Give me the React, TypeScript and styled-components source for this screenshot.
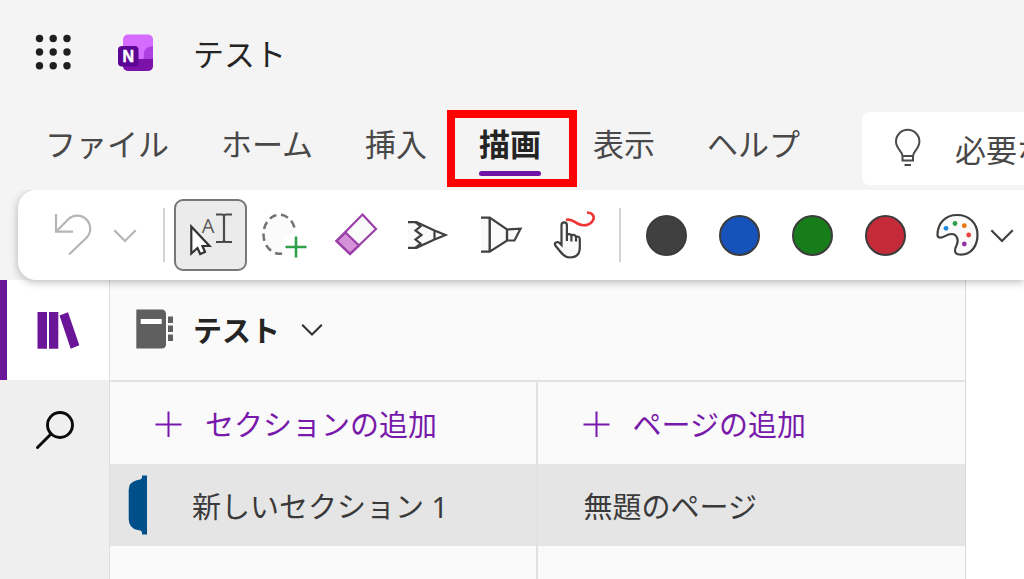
import React from "react";
import styled, { createGlobalStyle } from "styled-components";

const GlobalStyle = createGlobalStyle`
  *, *::before, *::after { box-sizing: border-box; }
  body {
    margin: 0;
    overflow: hidden;
    background: #f4f4f4;
    color: #242424;
    font-family: "Noto Sans", "Noto Sans CJK JP", sans-serif;
  }
  button, input {
    margin: 0;
    padding: 0;
    border: 0;
    background: none;
    color: inherit;
    font: inherit;
  }
  button { cursor: pointer; }
  svg { display: block; flex: none; }
`;

const Page = styled.div`
  display: flex;
  flex-direction: column;
  min-height: 100vh;
`;

const Header = styled.header`
  display: flex;
  align-items: center;
  height: 108px;
  padding: 0 32px 4px;
`;

const LauncherButton = styled.button`
  margin-right: 42px;
`;

const DocumentTitle = styled.h1`
  margin: 0 0 0 35px;
  padding-top: 4px;
  font-size: 31px;
  line-height: 44px;
  font-weight: 400;
`;

const TabRow = styled.div`
  display: flex;
  height: 82px;
  padding-left: 45px;
`;

const Tabs = styled.nav`
  display: flex;
  flex: none;
  gap: 52px;
`;

const Tab = styled.button<{ $active?: boolean }>`
  position: relative;
  height: 74px;
  padding-bottom: 2px;
  font-size: 31px;
  line-height: 44px;
  white-space: nowrap;
  font-weight: ${(p) => (p.$active ? 700 : 400)};
  color: ${(p) => (p.$active ? "#242424" : "#484848")};
`;

const TabUnderline = styled.span`
  position: absolute;
  left: 0;
  right: 0;
  bottom: 6px;
  height: 5px;
  border-radius: 3px;
  background: #7014a8;
`;

const HighlightFrame = styled.span`
  position: absolute;
  inset: 2px -36px -5px -32px;
  border: 8px solid #ff0000;
`;

const SearchBox = styled.label`
  display: flex;
  flex: 1;
  align-items: center;
  min-width: 0;
  height: 73px;
  margin: 4px 0 0 62px;
  padding-left: 30px;
  gap: 32px;
  border-radius: 8px 0 0 8px;
  background: #fff;
`;

const SearchInput = styled.input`
  flex: 1;
  min-width: 0;
  height: 46px;
  padding-top: 2px;
  outline: none;
  font-size: 31px;
  &::placeholder { color: #484848; opacity: 1; }
`;

const Toolbar = styled.div`
  position: relative;
  z-index: 1;
  display: flex;
  align-items: center;
  height: 90px;
  margin-left: 18px;
  padding-left: 16px;
  border-radius: 18px 0 0 18px;
  background: #fff;
  box-shadow: 0 2px 9px rgba(0, 0, 0, 0.28);
  clip-path: inset(0 0 -20px -20px);
`;

const ToolButton = styled.button<{ $selected?: boolean }>`
  display: flex;
  flex: none;
  align-items: center;
  justify-content: center;
  width: 73px;
  height: 72px;
  border: 2px solid ${(p) => (p.$selected ? "#777" : "transparent")};
  border-radius: 9px;
  background: ${(p) => (p.$selected ? "#ebebeb" : "none")};
`;

const PaletteButton = styled(ToolButton)`
  width: 71px;
`;

const ChevronButton = styled.button<{ $compact?: boolean }>`
  display: flex;
  flex: none;
  align-items: center;
  justify-content: center;
  width: ${(p) => (p.$compact ? "18px" : "36px")};
  height: 72px;
`;

const Divider = styled.span`
  flex: none;
  width: 2px;
  height: 54px;
  margin: 0 9px 0 7px;
  background: #d4d4d4;
`;

const WideDivider = styled(Divider)`
  margin-left: 20px;
`;

const Swatch = styled.span<{ $color: string }>`
  width: 41px;
  height: 41px;
  border: 2px solid #3c3c3c;
  border-radius: 50%;
  background: ${(p) => p.$color};
`;

const Workspace = styled.main`
  display: flex;
  flex: 1;
`;

const Rail = styled.nav`
  flex: none;
  width: 110px;
  border-right: 1px solid #dfdfdf;
  background: #efefef;
`;

const RailButton = styled.button<{ $active?: boolean }>`
  display: flex;
  align-items: center;
  justify-content: center;
  width: 100%;
  height: 100px;
  border-left: ${(p) => (p.$active ? "7px solid #6b1599" : "0")};
  background: ${(p) => (p.$active ? "#fff" : "transparent")};
`;

const Navigator = styled.section`
  display: flex;
  flex: 0 1 856px;
  flex-direction: column;
  min-width: 0;
  border-right: 1px solid #d9d9d9;
  background: #fafafa;
`;

const NotebookButton = styled.button`
  display: flex;
  align-items: center;
  height: 102px;
  padding: 0 0 2px 26px;
  border-bottom: 2px solid #e3e3e3;
  font-size: 29px;
  font-weight: 700;
  line-height: 42px;
`;

const Label = styled.span`
  padding-top: 3px;
`;

const NotebookName = styled(Label)`
  margin: 0 21px 0 19px;
`;

const Columns = styled.div`
  display: grid;
  flex: 1;
  grid-template-columns: 1fr 1fr;
`;

const Column = styled.div`
  &:first-child { border-right: 2px solid #e1e1e1; }
`;

const AddButton = styled.button`
  display: flex;
  align-items: center;
  width: 100%;
  height: 82px;
  padding-left: 45px;
  gap: 23px;
  color: #7719aa;
  font-size: 29px;
  line-height: 42px;
  white-space: nowrap;
`;

const ItemButton = styled(AddButton)<{ $tabbed?: boolean }>`
  padding-left: ${(p) => (p.$tabbed ? "18px" : "46px")};
  gap: 44px;
  background: #e5e5e5;
  color: #3a3a3a;
`;

const Canvas = styled.section`
  flex: 1;
  background: #fff;
`;

const LauncherIcon = () => (
  <svg width="42" height="42" viewBox="0 0 42 42" fill="#1f1f1f" aria-hidden="true">
    {[7.5, 21, 34.7].map((y) =>
      [7.5, 21.2, 35].map((x) => <circle key={`${x}-${y}`} cx={x} cy={y} r="3.7" />)
    )}
  </svg>
);

const OneNoteLogo = () => (
  <svg width="42" height="42" viewBox="0 0 42 42" aria-hidden="true">
    <defs>
      <clipPath id="logo-body">
        <rect x="7" y="3.5" width="30" height="36.5" rx="5" />
      </clipPath>
    </defs>
    <g clipPath="url(#logo-body)">
      <rect x="7" y="3" width="30" height="38" fill="#d56cff" />
      <path d="M37 15.5h-2a7 7 0 0 0-7 7v3a3 3 0 0 1-3 3h12z" fill="#ae3fe0" />
      <path d="M7 28h30v13H7z" fill="#7b13a9" />
    </g>
    <rect x="2" y="15" width="20.500" height="20.500" rx="4" fill="#5c0594" />
    <text x="12.300" y="31" textAnchor="middle" fontFamily="Liberation Sans, sans-serif" fontSize="16" fontWeight="700" fill="#fff" stroke="#fff" strokeWidth="0.500">N</text>
  </svg>
);

const BulbIcon = () => (
  <svg width="31" height="42" viewBox="0 0 31 42" fill="none" stroke="#4a4a4a" strokeWidth="2" aria-hidden="true">
    <path d="M10.500 28c0-5-6.500-7-6.500-14.500a11.700 11.700 0 0 1 23.400 0C27.400 21 21 23 21 28v4.500H10.500z" />
    <path d="M10.500 28H21M12.500 37H19" />
  </svg>
);

const Chevron = ({ color, size = 24 }: { color: string; size?: number }) => (
  <svg width={size} height={size} viewBox="0 0 24 24" fill="none" stroke={color} strokeWidth="2.200" aria-hidden="true">
    <path d="M1.300 7.300L12 18L22.700 7.300" />
  </svg>
);

const ToolSvg = ({ children }: { children: React.ReactNode }) => (
  <svg width="48" height="48" viewBox="0 0 48 48" fill="none" stroke="#404040" strokeWidth="2.200" aria-hidden="true">
    {children}
  </svg>
);

const UndoIcon = () => (
  <ToolSvg>
    <path d="M9 3V20.700H26M9 20.700L21.500 8A13 13 0 0 1 40 26.200L22 43.500" stroke="#b5b5b5" />
  </ToolSvg>
);

const SelectIcon = () => (
  <ToolSvg>
    <text x="21" y="21.500" textAnchor="middle" fontFamily="Open Sans, sans-serif" fontSize="20" fill="#5b5b5b" stroke="none">A</text>
    <path d="M29 3.500h6q2 0 2 2q0-2 2-2h6M37 5v25M29 31h6q2 0 2-2q0 2 2 2h6" stroke="#4a4a4a" />
    <path d="M4.300 15.500V42.500L10.500 37L13.200 43L18 41L15.500 35H22.500z" fill="#fff" stroke="#333" />
  </ToolSvg>
);

const LassoIcon = () => (
  <ToolSvg>
    <ellipse cx="20" cy="23.500" rx="16" ry="19.500" fill="#fbfbfb" stroke="none" />
    <path d="M34.500 16.500A16 19.500 0 1 0 22 42.500" stroke="#737373" strokeWidth="2.500" strokeDasharray="7.500 4.500" />
    <path d="M24 24h24v24H24z" fill="#fff" stroke="none" />
    <path d="M36 25.500V46.500M25.500 36H46.500" stroke="#2da04a" strokeWidth="2.600" />
  </ToolSvg>
);

const EraserIcon = () => (
  <ToolSvg>
    <path d="M29.500 3.500L43 18L17 43L3.500 30z" fill="#fafafa" stroke="none" />
    <path d="M12.500 21.500L26 34.500L17 43L3.500 30z" fill="#d592d8" stroke="#9b3fa8" />
    <path d="M29.500 3.500L43 18L17 43L3.500 30z" stroke="#9b3fa8" />
  </ToolSvg>
);

const PencilIcon = () => (
  <ToolSvg>
    <path d="M2 11.200H10.500L28.500 19.500L39.500 24L28.500 28.500L10.500 36.800H2" fill="#fafafa" />
    <path d="M9.500 11.200L14.500 15.500L9.500 19.500L15.500 24L9.500 28.500L14.500 32.500L9.500 36.800" />
    <path d="M28.500 19.500V28.500" />
  </ToolSvg>
);

const HighlighterIcon = () => (
  <ToolSvg>
    <path d="M2 6.700H10.700L28 18.500L41.500 17.700L35.500 29.500H28L10.700 40.700H2" fill="#fafafa" />
    <path d="M10.700 6.700V40.700M28 18.500V29.500" strokeWidth="2.400" />
  </ToolSvg>
);

const TouchIcon = () => (
  <ToolSvg>
    <path
      d="M9.500 34V14a2.700 2.700 0 0 1 5.400 0V24.500q0-1.300 2.200-1.300t2.300 1.800q.6-1.500 2.400-1.200t2.200 2q3.500-1 3.800 2.500V36.500q0 10-10 10c-4.500 0-7.500-3-10-6.500l-4.500-5.500q-1.200-2 .7-3t3.300.3z"
      fill="#fafafa"
    />
    <path d="M19.400 24.500v6M24 25.500v5M14.900 24v6" />
    <path d="M14 9c7-2.500 10 5.500 17.500 5.300s12.500-6.200 9-10.700q-2-2.300-5.500-1.800" stroke="#ef3434" strokeWidth="2.600" />
  </ToolSvg>
);

const PaletteIcon = () => (
  <ToolSvg>
    <path
      d="M3.500 24C3.500 12 11.500 4 23 4C35 4 43.500 12 43.500 24C43.500 35 37 43.700 27 43.700C19 43.700 20.500 38 22.700 34C25 29 23 23 17.500 23C12.500 23 10 26.700 6.500 26.700Q3.500 26.700 3.500 24z"
      fill="#fafafa"
    />
    <g stroke="none">
      <circle cx="12" cy="17.300" r="2.400" fill="#1e88e5" />
      <circle cx="21" cy="12.500" r="2.400" fill="#2da04a" />
      <circle cx="30.300" cy="14.700" r="2.400" fill="#ee7410" />
      <circle cx="34.700" cy="24" r="2.400" fill="#f04040" />
      <circle cx="30.300" cy="33" r="2.400" fill="#9332a8" />
    </g>
  </ToolSvg>
);

const BooksIcon = () => (
  <svg width="44" height="40" viewBox="0 0 44 40" fill="#6b1599" aria-hidden="true">
    <path d="M1.500 2H11v36.700H1.500zM13 2h9.300v36.700H13zM23.500 5.500L32 2.300L43.300 35.300L34.700 38.700z" />
  </svg>
);

const SearchIcon = () => (
  <svg width="40" height="40" viewBox="0 0 40 40" fill="none" stroke="#0a0a0a" strokeWidth="2.900" strokeLinecap="round" aria-hidden="true">
    <circle cx="25" cy="15" r="12.500" />
    <path d="M16 24L2.500 37.500" />
  </svg>
);

const NotebookIcon = () => (
  <svg width="38" height="40" viewBox="0 0 38 40" fill="#5f5f5f" aria-hidden="true">
    <path d="M.3.500H25.500q4.500 0 4.500 4.500V35q0 4.500-4.500 4.500H.3z" />
    <path d="M32 7.500h5v6.500h-5zM32 16.500h5V23h-5zM32 25.500h5V32h-5z" />
    <path d="M4.700 10h21v5h-21z" fill="#fff" />
  </svg>
);

const PlusIcon = () => (
  <svg width="27" height="27" viewBox="0 0 27 27" fill="none" stroke="#7719aa" strokeWidth="2" aria-hidden="true">
    <path d="M13.500 1.500V27M.5 14.500H26.500" />
  </svg>
);

const SectionTabIcon = () => (
  <svg width="20" height="60" viewBox="0 0 20 60" fill="#004f8b" aria-hidden="true">
    <path d="M14 .5H19V59.500H14V57Q13 55 9.500 55Q.7 53 .7 44V15Q.7 7 9.500 5Q13 5 14 3z" />
  </svg>
);

const menu = ["ファイル", "ホーム", "挿入", "描画", "表示", "ヘルプ"];

const drawingTools = [
  { label: "選択", Icon: SelectIcon },
  { label: "なげなわ選択", Icon: LassoIcon },
  { label: "消しゴム", Icon: EraserIcon },
  { label: "ペン", Icon: PencilIcon },
  { label: "蛍光ペン", Icon: HighlighterIcon },
  { label: "タッチして描画", Icon: TouchIcon },
];

const inks = [
  { label: "黒", color: "#404040" },
  { label: "青", color: "#1553bb" },
  { label: "緑", color: "#177d1b" },
  { label: "赤", color: "#c52a39" },
];

export default function App() {
  return (
    <Page>
      <GlobalStyle />
      <Header>
        <LauncherButton aria-label="アプリ起動ツール">
          <LauncherIcon />
        </LauncherButton>
        <OneNoteLogo />
        <DocumentTitle>テスト</DocumentTitle>
      </Header>

      <TabRow>
        <Tabs>
          {menu.map((name) => (
            <Tab key={name} $active={name === "描画"}>
              {name}
              {name === "描画" && (
                <>
                  <TabUnderline />
                  <HighlightFrame />
                </>
              )}
            </Tab>
          ))}
        </Tabs>
        <SearchBox>
          <BulbIcon />
          <SearchInput aria-label="検索" placeholder="必要な作業を入力" />
        </SearchBox>
      </TabRow>

      <Toolbar role="toolbar">
        <ToolButton aria-label="元に戻す">
          <UndoIcon />
        </ToolButton>
        <ChevronButton aria-label="元に戻す履歴">
          <Chevron color="#b5b5b5" />
        </ChevronButton>
        <WideDivider />
        {drawingTools.map(({ label, Icon }, i) => (
          <ToolButton key={label} aria-label={label} $selected={i === 0}>
            <Icon />
          </ToolButton>
        ))}
        <Divider />
        {inks.map(({ label, color }) => (
          <ToolButton key={label} aria-label={label}>
            <Swatch $color={color} />
          </ToolButton>
        ))}
        <PaletteButton aria-label="その他の色">
          <PaletteIcon />
        </PaletteButton>
        <ChevronButton aria-label="色のオプション" $compact>
          <Chevron color="#404040" />
        </ChevronButton>
      </Toolbar>

      <Workspace>
        <Rail>
          <RailButton aria-label="ノートブック" $active>
            <BooksIcon />
          </RailButton>
          <RailButton aria-label="検索">
            <SearchIcon />
          </RailButton>
        </Rail>
        <Navigator>
          <NotebookButton>
            <NotebookIcon />
            <NotebookName>テスト</NotebookName>
            <Chevron color="#303030" size={22} />
          </NotebookButton>
          <Columns>
            <Column>
              <AddButton>
                <PlusIcon />
                <Label>セクションの追加</Label>
              </AddButton>
              <ItemButton $tabbed>
                <SectionTabIcon />
                <Label>新しいセクション 1</Label>
              </ItemButton>
            </Column>
            <Column>
              <AddButton>
                <PlusIcon />
                <Label>ページの追加</Label>
              </AddButton>
              <ItemButton>
                <Label>無題のページ</Label>
              </ItemButton>
            </Column>
          </Columns>
        </Navigator>
        <Canvas />
      </Workspace>
    </Page>
  );
}
